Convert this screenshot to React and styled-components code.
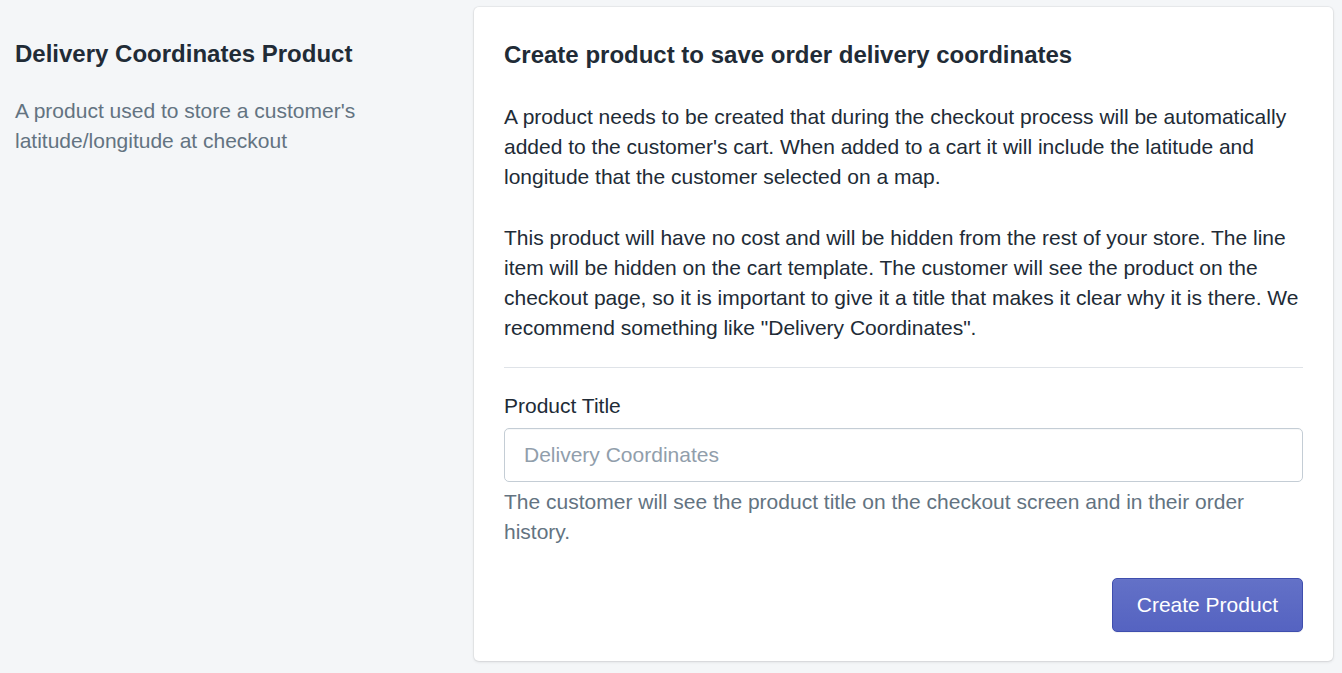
import React from 'react'
import styled, { createGlobalStyle } from 'styled-components';

const GlobalStyle = createGlobalStyle`
  html, body {
    margin: 0;
    padding: 0;
    background: #f4f6f8;
  }
  body {
    font-family: "Liberation Sans", Arial, sans-serif;
    color: #212b36;
    -webkit-font-smoothing: antialiased;
  }
`;

const App = () => {
  return (
    <>
      <GlobalStyle />
      <Page>
        <Annotation>
          <AnnotationTitle>Delivery Coordinates Product</AnnotationTitle>
          <Subdued>A product used to store a customer's latitude/longitude at checkout</Subdued>
        </Annotation>

        <Card>
          <CardSection>
            <CardTitle>Create product to save order delivery coordinates</CardTitle>
            <Text>
              A product needs to be created that during the checkout process will be automatically
              added to the customer's cart. When added to a cart it will include the latitude and
              longitude that the customer selected on a map.
            </Text>
            <Text>
              This product will have no cost and will be hidden from the rest of your store. The line
              item will be hidden on the cart template. The customer will see the product on the
              checkout page, so it is important to give it a title that makes it clear why it is there. We
              recommend something like "Delivery Coordinates".
            </Text>
          </CardSection>

          <FormSection>
            <Label htmlFor="product-title">Product Title</Label>
            <Input id="product-title" type="text" placeholder="Delivery Coordinates" />
            <HelpText>
              The customer will see the product title on the checkout screen and in their order history.
            </HelpText>
            <Actions>
              <PrimaryButton>Create Product</PrimaryButton>
            </Actions>
          </FormSection>
        </Card>
      </Page>
    </>
  )
}

const Page = styled.div`
  display: flex;
  align-items: flex-start;
  padding: 7px 9px 12px 15px;
`;

const Annotation = styled.div`
  flex: 0 0 459px;
  box-sizing: border-box;
  padding: 29px 90px 0 0;
`;

const AnnotationTitle = styled.h2`
  margin: 0 0 24px;
  font-size: 24px;
  line-height: 36px;
  font-weight: 700;
  color: #212b36;
`;

const Subdued = styled.p`
  margin: 0;
  font-size: 21px;
  line-height: 30px;
  color: #637381;
`;

const Card = styled.div`
  flex: 1;
  background: #fff;
  border-radius: 5px;
  box-shadow: 0 0 0 1px rgba(63, 63, 68, 0.05), 0 1px 3px 0 rgba(63, 63, 68, 0.15);
`;

const CardSection = styled.div`
  padding: 30px 30px 24px;
`;

const CardTitle = styled.h2`
  margin: 0 0 29px;
  font-size: 24px;
  line-height: 36px;
  font-weight: 700;
`;

const Text = styled.p`
  margin: 0 0 31px;
  font-size: 21px;
  line-height: 30px;

  &:last-child {
    margin-bottom: 0;
  }
`;

const FormSection = styled.div`
  margin: 0 30px;
  padding: 23px 0 29px;
  border-top: 1px solid #dfe3e8;
`;

const Label = styled.label`
  display: block;
  margin-bottom: 7px;
  font-size: 21px;
  line-height: 30px;
`;

const Input = styled.input`
  display: block;
  width: 100%;
  box-sizing: border-box;
  height: 54px;
  padding: 0 19px;
  border: 1px solid #c4cdd5;
  border-radius: 5px;
  font-family: inherit;
  font-size: 21px;
  color: #212b36;
  box-shadow: inset 0 1px 0 0 rgba(99, 115, 129, 0.05);

  &::placeholder {
    color: #919eab;
  }
`;

const HelpText = styled.p`
  margin: 5px 0 0;
  font-size: 21px;
  line-height: 30px;
  color: #637381;
`;

const Actions = styled.div`
  display: flex;
  justify-content: flex-end;
  margin-top: 31px;
`;

const PrimaryButton = styled.button`
  height: 54px;
  padding: 0 24px;
  border: 1px solid #3f4eae;
  border-radius: 5px;
  background: linear-gradient(180deg, #6371c7, #5563c1);
  box-shadow: inset 0 1px 0 0 #6774c8, 0 1px 0 0 rgba(22, 29, 37, 0.05);
  color: #fff;
  font-family: inherit;
  font-size: 21px;
  cursor: pointer;
`;

export default App;
